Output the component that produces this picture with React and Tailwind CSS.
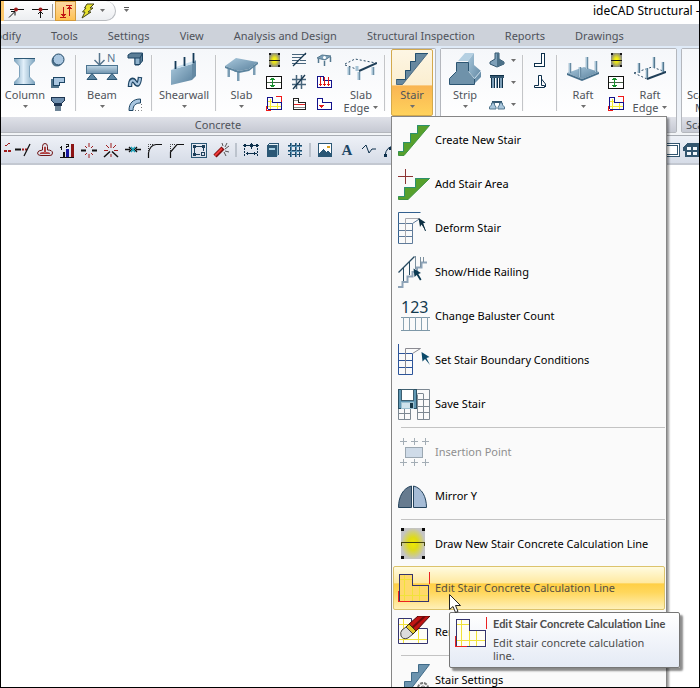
import React from 'react';

const NAVY = '#0c2f4b';

function Svg({ s = 16, children, crisp = true, className = '' }) {
  return (
    <svg
      width={s}
      height={s}
      viewBox={`0 0 ${s} ${s}`}
      fill="none"
      shapeRendering={crisp ? 'crispEdges' : 'auto'}
      className={`shrink-0 ${className}`}
      aria-hidden="true"
    >
      {children}
    </svg>
  );
}

function Gradients() {
  return (
    <svg width="0" height="0" className="absolute" aria-hidden="true">
      <defs>
        <linearGradient id="steelH">
          <stop offset="0" stopColor="#7fa6c0" />
          <stop offset="0.45" stopColor="#e2f0fa" />
          <stop offset="1" stopColor="#7fa6c0" />
        </linearGradient>
        <linearGradient id="steelV" x2="0" y2="1">
          <stop offset="0" stopColor="#c3d9e8" />
          <stop offset="1" stopColor="#6f93ad" />
        </linearGradient>
        <linearGradient id="steelD" x2="1" y2="1">
          <stop offset="0" stopColor="#a9c8dc" />
          <stop offset="1" stopColor="#5b829e" />
        </linearGradient>
        <radialGradient id="glow">
          <stop offset="0" stopColor="#f0ea00" />
          <stop offset="0.4" stopColor="#dfdb18" />
          <stop offset="1" stopColor="#c4c4c4" />
        </radialGradient>
        <radialGradient id="glowDark">
          <stop offset="0" stopColor="#ffff00" />
          <stop offset="0.4" stopColor="#e6e020" />
          <stop offset="1" stopColor="#8c8c80" />
        </radialGradient>
      </defs>
    </svg>
  );
}

/* ---------- large ribbon drawings ---------- */

const ColumnIcon = () => (
  <Svg s={32} crisp={false}>
    <path d="M5.500 5.500H25.500V8L20.500 13V24L25.500 29V31.500H5.500V29L10.500 24V13L5.500 8Z" fill="url(#steelH)" stroke="#7ea3bd" />
    <path d="M5 5.500H26M5 31.500H26" stroke="#2d5876" />
  </Svg>
);
const BeamIcon = () => (
  <Svg s={32} crisp={false}>
    <path d="M13.500 0V12M8.500 7L13.500 12L18.500 7" stroke="#55748c" strokeWidth="1.500" />
    <text x="21" y="9" fontSize="11" fontFamily="Noto Sans, sans-serif" fill="#55748c">N</text>
    <rect x="0.500" y="12.500" width="31" height="8" fill="url(#steelV)" stroke="#4c7490" />
    <path d="M6 20.500L11 26.500H1ZM26 20.500L31 26.500H21Z" fill="#5f88a4" stroke="#2a5472" />
  </Svg>
);
const ShearwallIcon = () => (
  <Svg s={32} crisp={false}>
    <path d="M3 17L24 11V27L3 32Z" fill="url(#steelD)" />
    <path d="M3 17L8 14L28 7L24 11Z" fill="#c8dfee" />
    <path d="M24 11L28 7V23L24 27Z" fill="#6489a3" />
    <path d="M7.500 8V16M16.500 4V13M25.500 0V10" stroke="#143a58" strokeWidth="1.800" />
  </Svg>
);
const SlabIcon = () => (
  <Svg s={34} crisp={false}>
    <path d="M2.500 15H5V24H2.500ZM12 18H14.500V28H12ZM28 12H30.500V22H28ZM9.500 16H11.500V19H9.500Z" fill="#7b9db4" />
    <path d="M0 13L11 5L33 9L24 16L14 18Z" fill="url(#steelD)" />
    <path d="M0 13L14 18L24 16L33 9V11L24 18L14 20L0 15Z" fill="#5c849e" />
  </Svg>
);
const SlabEdgeIcon = () => (
  <Svg s={32} crisp={false}>
    <path d="M0 11L10 6L31 10" stroke="#2a4c66" strokeDasharray="2 2" />
    <path d="M0 12L14 17" stroke="#2a4c66" strokeDasharray="2 2" />
    <path d="M4 14V22M14 19V27M28 14V22M12 13V18" stroke="#a5c2d4" strokeWidth="3" />
    <path d="M4.500 14V22M14.500 19V27M28.500 14V22" stroke="#6f90a6" />
    <path d="M14 18L32 10" stroke="#1f3f58" strokeWidth="2" />
  </Svg>
);
const STAIR = 'M31.500 0.500H19.500V8.500H14.500V17.500H9.500V26.500H0.500V31.500H6.500Z';
const StairIcon = () => (
  <Svg s={32} crisp={false}>
    <path d={STAIR} fill="#67889f" stroke="#4c6c84" />
    <path d="M32 0.500H19.500V8.500H14.500V17.500H9.500V26.500H0.500" stroke="#24506f" />
  </Svg>
);
const StripIcon = () => (
  <Svg s={32} crisp={false}>
    <path d="M9 8L16 0H25L19 8Z" fill="#b5d0e2" />
    <path d="M19 8L25 0V12L32 18V24L25 31L19 22Z" fill="url(#steelD)" />
    <path d="M7.500 9.500H19.500V18.500L25.500 25.500V31.500H0.500V25.500L7.500 18.500Z" fill="#6f92aa" stroke="#2c5572" />
    <path d="M19.500 18.500L25.500 25.500L32 18" stroke="#cfe2ee" />
  </Svg>
);
const RaftIcon = () => (
  <Svg s={32} crisp={false}>
    <path d="M0 20L17 14L32 19L15 26Z" fill="url(#steelD)" />
    <path d="M0 20L15 26L32 19V21L15 28L0 22Z" fill="#466f8b" />
    <path d="M3 10V20M13 14V24M20 4V16M29 8V19" stroke="#688ba3" strokeWidth="2.500" />
    <path d="M2.500 10V20M12.500 14V24M19.500 4V16M28.500 8V19" stroke="#a9c6d8" />
  </Svg>
);
const RaftEdgeIcon = () => (
  <Svg s={32} crisp={false}>
    <path d="M0 20L18 14L32 19M0 20L13 26" stroke="#2a4c66" strokeDasharray="2 2" />
    <path d="M13 26L32 19" stroke="#1f3f58" strokeWidth="2" />
    <path d="M5 10V20M13 15V25M20 4V15M29 9V19" stroke="#8fb0c4" strokeWidth="2.500" />
    <path d="M5.500 10V20M13.500 15V25M20.500 4V15M29.500 9V19" stroke="#55788f" />
  </Svg>
);

/* ---------- small ribbon drawings ---------- */

const CircleCol = () => (
  <Svg crisp={false}>
    <circle cx="7" cy="9" r="5.500" fill="#52748c" />
    <circle cx="8.500" cy="7.500" r="5.500" fill="#a9c6e0" stroke="#1d4564" />
  </Svg>
);
const PolyCol = () => (
  <Svg>
    <path d="M1 5H4V14H1ZM1 12H9V14H1Z" fill="#52748c" />
    <path d="M3.500 3.500H14.500V8.500H9.500V11.500H3.500Z" fill="#a9c6e0" stroke="#1d4564" />
  </Svg>
);
const CapCol = () => (
  <Svg>
    <path d="M1.500 1.500H14.500V4.500L11.500 7.500H4.500L1.500 4.500Z" fill="#6f8fae" stroke="#1d3450" />
    <path d="M4 8H12V10H4Z" fill="#1d3450" />
    <path d="M5 10H11V15H5Z" fill="#6c8396" />
  </Svg>
);
const BeamBox = () => (
  <Svg crisp={false}>
    <path d="M1 3L4 1H15.500V9L12 13H8V6H1Z" fill="#5a7d96" stroke="#1d4564" />
    <path d="M8 6H13V12.500H8Z" fill="#8fb2cc" stroke="#1d4564" />
    <path d="M13 6L15 2" stroke="#1d4564" />
  </Svg>
);
const BeamWave = () => (
  <Svg crisp={false}>
    <path d="M3 13C3 5 6 4 8 8S12 12 13 3" stroke="#1d4564" strokeWidth="4.500" />
    <path d="M3 12C3 6 6 5 8 8S12 12 13 4" stroke="#a9c6e0" strokeWidth="2.200" />
  </Svg>
);
const BeamArc = () => (
  <Svg crisp={false}>
    <path d="M2 14.500C2 7 6 3 13.500 3V7C9 7 6 9 6 14.500Z" fill="#a9c6e0" stroke="#1d4564" />
    <path d="M14.500 8V14.500H8" stroke="#777" strokeDasharray="1 2" />
  </Svg>
);
const Glow = () => (
  <Svg>
    <rect x="3" y="1" width="11" height="14" fill="url(#glowDark)" />
    <path d="M3 1H5V3H3ZM12 1H14V3H12ZM3 13H5V15H3ZM12 13H14V15H12ZM3 8H14V9H3Z" fill="#151515" />
  </Svg>
);
const SlabSpan = () => (
  <Svg>
    <rect x="0.500" y="2.500" width="15" height="12" fill="#fff" stroke="#111" />
    <path d="M1 8.500H15" stroke="#476047" />
    <path d="M6.500 4V13M4 5.500H9M5 4.500H8M4 11.500H9M5 12.500H8" stroke="#15902c" />
  </Svg>
);
const LShape = () => (
  <Svg>
    <path d="M1.500 2.500H6.500V6.500H15.500V13.500H1.500Z" fill="#fffef0" />
    <path d="M4.500 3V13M2 10.500H15M11.500 7V13M2 5.500H6" stroke="#f2ea30" />
    <path d="M1.500 13V1.500H6.500V6.500H15.500V13.500H1.500" stroke="#12128c" />
    <path d="M10 0.500H15.500V6M0.500 10V14.500H5" stroke="#f01818" />
  </Svg>
);
const Hatch = () => (
  <Svg crisp={false}>
    <path d="M1 2.500H15M1 5.500H11M1 8.500H8M9 8.500H15M1 11.500H15" stroke="#47657c" />
    <path d="M2 14L15 1" stroke="#16364e" strokeWidth="1.300" />
  </Svg>
);
const GridHatch = () => (
  <Svg crisp={false}>
    <path d="M1 5.500H15M1 10.500H15M5.500 1V15M10.500 1V15" stroke="#47657c" strokeWidth="1.500" />
    <path d="M2 15L14 1" stroke="#16364e" strokeWidth="1.300" />
  </Svg>
);
const StepLines = () => (
  <Svg>
    <path d="M2.500 2.500H7.500V6.500H14.500V13.500H2.500Z" fill="#fff" stroke="#222" />
    <path d="M3 4.500H7M3 11.500H14" stroke="#888" />
    <path d="M3 8.500H14" stroke="#e02020" />
  </Svg>
);
const MiniTable = () => (
  <Svg crisp={false}>
    <path d="M1 6L6 3L15 4L9 8Z" fill="#7da0b8" stroke="#55788f" />
    <circle cx="8.500" cy="5.500" r="1.500" fill="#fff" />
    <path d="M2.500 7V11M8.500 9V14M14.500 5V10" stroke="#55788f" strokeWidth="1.500" />
  </Svg>
);
const LoadIcon = () => (
  <Svg>
    <path d="M1.500 2.500H7.500V6.500H15.500V13.500H1.500Z" fill="#fff" stroke="#12128c" />
    <path d="M4.500 3V12M8.500 3V12M12.500 3V12M3 10.500H6M7 10.500H10M11 10.500H14" stroke="#e01818" />
  </Svg>
);
const SlabTri = () => (
  <Svg>
    <path d="M1.500 2.500H6.500V6.500H15.500V13.500H1.500Z" fill="#fff" stroke="#12128c" />
    <path d="M3 9H8L5.500 12Z" fill="#e01818" />
  </Svg>
);
const Footing = () => (
  <Svg crisp={false}>
    <path d="M6 1H10V7L15 10V12L8 15L1 12V10L6 7Z" fill="#7d9fb8" stroke="#33566f" />
    <path d="M8 1H10V7L15 10V12L8 15Z" fill="#4b7088" />
  </Svg>
);
const Piles = () => (
  <Svg>
    <path d="M1 1H15V4H1Z" fill="#33566f" />
    <path d="M3 4H5V14H3ZM7 4H9V14H7ZM11 4H13V14H11Z" fill="#7d9fb8" />
    <path d="M2.500 4V14M5.500 4V14M8.500 4V14M10.500 4V14M13.500 4V14M1 1.500H15" stroke="#0f3048" />
  </Svg>
);
const Combined = () => (
  <Svg crisp={false}>
    <path d="M3 5H13V7H3Z" fill="#33566f" />
    <path d="M2.500 7H5.500V9L7 11V13H0.500V11L2.500 9ZM10.500 7H13.500V9L15.500 11V13H9V11L10.500 9Z" fill="#a9c6dc" stroke="#55788f" />
  </Svg>
);
const WallFoot = () => (
  <Svg>
    <path d="M9.500 1.500H12.500V14.500H2.500V11.500H9.500Z" fill="#fff" stroke={NAVY} />
  </Svg>
);
const WallFoot2 = () => (
  <Svg crisp={false}>
    <path d="M6.500 1.500H9.500V11.500H12.500V13.500H2.500V11.500H6.500ZM9.500 5L13.500 10V13" fill="#fff" stroke={NAVY} />
  </Svg>
);

/* ---------- menu drawings ---------- */

const pointer = 'M0 0L7.500 4.500L4.800 5.500L8 11L6.500 12L3.200 6.500L1 8.500Z';

const GreenStair = () => (
  <Svg s={32} crisp={false}>
    <path d="M31.500 1.500H19.500V9.500H12.500V18.500H5.500V27.500H0.500V31.500H6Z" fill="#57a02c" stroke="#3f9440" />
    <path d="M31.500 1.500H19.500V9.500H12.500V18.500H5.500V27.500H0.500" stroke="#2c8f6c" />
  </Svg>
);
const AddArea = () => (
  <Svg s={32} crisp={false}>
    <path d="M31.500 10.500H17.500V19.500H6.500V28.500H0.500V31.500H10Z" fill="#57a02c" stroke="#3f9440" />
    <path d="M31.500 10.500H17.500V19.500H6.500V28.500H0.500" stroke="#2c8f6c" />
    <path d="M7.500 1V16M0 8.500H15" stroke="#8d3434" />
  </Svg>
);
const Deform = () => (
  <Svg s={32} crisp={false}>
    <path d="M0.500 31.500V0.500H22.500" stroke="#33608f" />
    <path d="M0.500 11.500H14.500L22 6.500M0.500 18.500H14M0.500 24.500H14M0.500 31.500H14.500V11.500" stroke="#5f7b9a" />
    <path d="M7.500 31V6.500H22" stroke="#a9a9ae" />
    <path d="M0 0L7 4.500L4.500 5.500L7 12.500L3 6.500L1.500 9Z" fill="#0c2f42" transform="translate(20.500 6)" />
    <path d="M24 10L27.500 19" stroke="#0c2f42" />
  </Svg>
);
const Railing = () => (
  <Svg s={32} crisp={false}>
    <path d="M0 31H4.500V26H9.500V20.500H14.500V16H19V11.500H23.500V6.500H29" stroke="#8ea3b7" strokeWidth="2" />
    <path d="M0.500 16.500L16.500 0.500" stroke="#274a60" strokeWidth="1.300" />
    <path d="M5.500 12V25M11.500 6V19" stroke="#274a60" />
    <path d="M17.500 0V13M22.500 1V11M25.500 1V6" stroke="#7b8f9e" />
    <path d={pointer} fill="#0c3a52" transform="translate(15.500 12.500)" />
  </Svg>
);
const Baluster = () => (
  <Svg s={32} crisp={false}>
    <text x="3" y="13" fontSize="16" fontFamily="Noto Sans, sans-serif" fill="#143a4e">123</text>
    <path d="M3 17.500H32M3 30.500H32" stroke="#7e98a8" />
    <path d="M5.500 17V30M11.500 17V30M17.500 17V30M23.500 17V30M29.500 17V30" stroke="#8ba3b2" />
  </Svg>
);
const Boundary = () => (
  <Svg s={32} crisp={false}>
    <path d="M0.500 0V30.500H14.500V9.500H0.500M0.500 16.500H14M0.500 23.500H14" stroke="#2c549a" />
    <path d="M7.500 30V4.500H22.500L14.500 9.500" stroke="#8a8a92" />
    <path d="M0 0L8 5L5 6L8.500 13L3.500 7L1 9.500Z" fill="#0c4a6a" transform="translate(23.500 8)" />
  </Svg>
);
const SaveStair = () => (
  <Svg s={32} crisp={false}>
    <path d="M19 1.500H31.500V31.500H19.500V6.500M25.500 6V31M19.500 5.500H25.500M19 11.500H31M19 18.500H31M19 24.500H31M0.500 20V31.500H12.500V21M6.500 21V31M0.500 25.500H12" stroke="#7d8892" />
    <rect x="0.500" y="1.500" width="18" height="19" fill="#5f97b3" stroke="#2a5064" />
    <rect x="3.500" y="1.500" width="12" height="11" fill="#fff" stroke="#3f5f70" />
    <rect x="3.500" y="14.500" width="12" height="6" fill="#cfe3ec" stroke="#9cc0d0" />
    <rect x="12" y="15" width="3" height="5" fill="#173848" />
  </Svg>
);
const Insertion = () => (
  <Svg s={32}>
    <path d="M2 5.500H9M5.500 2V9M13 5.500H20M16.500 2V9M24 5.500H31M27.500 2V9M2 26.500H9M5.500 23V30M13 26.500H20M16.500 23V30M24 26.500H31M27.500 23V30" stroke="#a3adb5" />
    <rect x="7.500" y="11.500" width="17" height="10" fill="#cfdbe8" stroke="#9ba7b1" />
  </Svg>
);
const Mirror = () => (
  <Svg s={32} crisp={false}>
    <path d="M13.500 6C5 8 0.500 17 0.500 27.500H13.500Z" fill="#677b8f" stroke="#24435c" />
    <path d="M15.500 6C24 8 28.500 17 28.500 27.500H15.500Z" fill="#a6bcd6" stroke="#24435c" />
  </Svg>
);
const DrawLine = () => (
  <Svg s={32}>
    <rect x="3" y="0" width="24" height="31" fill="url(#glow)" />
    <path d="M3 0H6V3H3ZM24 0H27V3H24ZM3 28H6V31H3ZM24 28H27V31H24Z" fill="#0a0a0a" />
    <path d="M3.500 18V14.500H26.500V18" stroke="#43430f" />
  </Svg>
);
const EditLine = ({ fill = '#fffef6' }) => (
  <Svg s={32}>
    <path d="M1.500 2.500H14.500V13.500H31.500V29.500H1.500Z" fill={fill} />
    <path d="M6.500 3V29M2 7.500H14M2 23.500H31M21.500 14V29M14.500 14V29" stroke="#f1e23a" />
    <path d="M1.500 2.500H14.500V13.500H30.500V29.500H1.500Z" stroke="#34346e" />
    <path d="M31.500 0V12M0.500 19V29.500H12" stroke="#ea2222" />
  </Svg>
);
const RemoveLine = () => (
  <Svg s={32} crisp={false}>
    <path d="M0.500 2.500H13.500V12.500H29.500V27.500H0.500Z" fill="#fffef6" stroke="#34346e" />
    <path d="M5.500 3V27M1 8.500H13M1 23.500H29M20.500 13V27" stroke="#f1e23a" />
    <path d="M20 0H32L18 15L11 8Z" fill="#c01414" stroke="#4d0808" />
    <path d="M27 0L14 12" stroke="#6b0c0c" strokeWidth="2" />
    <path d="M11 8L18 15L15 18L8 11Z" fill="#e2c72a" stroke="#3a3208" />
    <path d="M8 11L15 18L10 22Q5 24 3 20Q2 16 4 14Z" fill="#dcdcdc" stroke="#444" />
  </Svg>
);
const StairSettings = () => (
  <Svg s={32} crisp={false}>
    <path d="M31.500 0.500H20.500V8.500H13.500V17.500H6.500V26.500H0.500V31.500H8Z" fill="#6b93ae" stroke="#406b88" />
    <circle cx="25" cy="24" r="5" fill="#f4f4f4" stroke="#777" strokeWidth="2" strokeDasharray="3 1" />
    <circle cx="25" cy="24" r="2" fill="#fafafa" stroke="#777" />
  </Svg>
);

/* ---------- toolbar drawings ---------- */

const T = {
  cut: () => (
    <Svg>
      <path d="M8 8.500H15" stroke="#a01c1c" strokeWidth="2" strokeDasharray="3 1" />
      <path d="M9 4L14 1" stroke="#a01c1c" />
    </Svg>
  ),
  trim: () => (
    <Svg crisp={false}>
      <path d="M0 7.500H6" stroke="#111" strokeWidth="2" />
      <path d="M7 7.500H12" stroke="#a01c1c" strokeWidth="2" strokeDasharray="2 1" />
      <path d="M9 14L15 2" stroke="#111" strokeWidth="1.300" />
    </Svg>
  ),
  offset: () => (
    <Svg crisp={false}>
      <path d="M5.500 8V4.500A2.500 3 0 0 1 10.500 4.500V8Q15.500 8 15.500 11T12 13.500H4Q0.500 13.500 0.500 11T5.500 8Z" stroke="#701414" />
      <path d="M3 11.500H13Q13 10.500 8.500 10.500V5H7.500V10.500Q3 10.500 3 11.500Z" stroke="#b04040" />
    </Svg>
  ),
  order: () => (
    <Svg>
      <path d="M4 10H6V15H4Z" fill="#111" />
      <path d="M7 7H10V15H7Z" fill="#1616a0" />
      <path d="M12 2H15V15H12Z" fill="#8c1414" />
      <path d="M2.500 4V8M1 5.500H2M1 15.500H15M7 2.500H9V4.500H7V6" stroke="#111" />
    </Svg>
  ),
  extendH: () => (
    <Svg crisp={false}>
      <path d="M0 8.500H5M11 8.500H16" stroke="#111" strokeWidth="2" />
      <path d="M8 1V5M8 12V16M4 4L6 6M12 4L10 6M4 13L6 11M12 13L10 11" stroke="#a01c1c" />
    </Svg>
  ),
  extendX: () => (
    <Svg crisp={false}>
      <path d="M1 15L7 9.500M15 15L9 9.500" stroke="#111" strokeWidth="1.500" />
      <path d="M8 1V6M8 12V15M3 3L6 6M13 3L10 6M1 8.500H5M11 8.500H15" stroke="#a01c1c" />
    </Svg>
  ),
  join: () => (
    <Svg crisp={false}>
      <path d="M0 7.500H5M11 7.500H16M4 5L6.500 7.500L4 10M12 5L9.500 7.500L12 10" stroke="#111" strokeWidth="1.300" />
      <path d="M6 5L10 10M10 5L6 10" stroke="#18a0b8" strokeWidth="1.500" />
    </Svg>
  ),
  fillet: () => (
    <Svg crisp={false}>
      <path d="M1.500 16V11Q3 3 9 2.500H15" stroke="#111" strokeWidth="1.200" />
      <path d="M1.500 9V2.500H7" stroke="#333" strokeDasharray="1 1" />
    </Svg>
  ),
  chamfer: () => (
    <Svg crisp={false}>
      <path d="M1.500 16V10L8 2.500H15" stroke="#111" strokeWidth="1.200" />
      <path d="M1.500 9V2.500H7" stroke="#333" strokeDasharray="1 1" />
    </Svg>
  ),
  frame: () => (
    <Svg>
      <rect x="0.500" y="1.500" width="15" height="14" stroke="#2b5775" />
      <path d="M3.500 11V4.500H12.500V9M5 12.500H9" stroke="#1d3f5a" />
      <path d="M2 3H5V6H2ZM11 3H14V6H11ZM2 11H5V14H2Z" fill="#1d3f5a" />
      <rect x="10.500" y="10.500" width="3" height="3" stroke="#1d3f5a" />
    </Svg>
  ),
  wand: () => (
    <Svg crisp={false}>
      <path d="M2 14L10 6" stroke="#7c0c0c" strokeWidth="4.500" />
      <path d="M2 13.500L9 6.500" stroke="#f03a3a" strokeWidth="2" />
      <path d="M10 4L9 1M12 5L14 1M12 7L16 4M12 9L16 10M11 10L13 14" stroke="#555" />
    </Svg>
  ),
  dims: () => (
    <Svg>
      <path d="M0 3.500H16M3 11.500H14" stroke={NAVY} />
      <path d="M1.500 6V15M14.500 6V15M8.500 5V8" stroke={NAVY} strokeDasharray="2 1" />
      <path d="M1 2H3V5H1ZM8 1H9V6H8ZM7 2H10V5H7ZM13 2H15V5H13ZM4 10H5V13H4ZM11 10H12V13H11Z" fill={NAVY} />
    </Svg>
  ),
  book: () => (
    <Svg>
      <path d="M2 4L4 1H14V12L12 15H2Z" fill="#2b5775" />
      <path d="M4 2H13V3H4Z" fill="#e8f2f8" />
      <path d="M4 6H10V8H4Z" fill="#a9d0e4" />
      <path d="M12.500 3V14" stroke="#8db4c8" />
    </Svg>
  ),
  grid: () => (
    <Svg>
      <path d="M1 3.500H15M1 8.500H15M1 12.500H15M3.500 1V15M8.500 1V15M12.500 1V15" stroke="#1f4a68" />
      <path d="M1 4.500H15M1 9.500H15M4.500 1V15M9.500 1V15" stroke="#5d93b4" />
    </Svg>
  ),
  image: () => (
    <Svg>
      <rect x="1.500" y="1.500" width="13" height="13" fill="#fff" stroke="#2b5775" />
      <path d="M2 11L6 7L9 10L11 9L14 12V14H2Z" fill="#2b5775" />
      <path d="M10 4H13V6H10Z" fill="#d8a020" />
    </Svg>
  ),
  wave: () => (
    <Svg crisp={false}>
      <path d="M1 7L5 3L8 11L11 7H15" stroke={NAVY} />
    </Svg>
  ),
  arc: () => (
    <Svg crisp={false}>
      <path d="M2 14Q3 4 12 4" stroke={NAVY} />
      <path d="M1 12H4V15H1ZM6 5H9V8H6Z" fill={NAVY} />
    </Svg>
  ),
  page: () => (
    <Svg>
      <rect x="0.500" y="1.500" width="15" height="13" fill="#fff" stroke="#33566f" />
      <rect x="2.500" y="3.500" width="11" height="9" stroke="#33566f" />
    </Svg>
  ),
  house: () => (
    <Svg>
      <path d="M0 5L4 1H16V15H2V9H0Z" fill="#33566f" />
      <path d="M4 5H8V8H4ZM10 5H14V8H10ZM4 10H8V13H4ZM10 10H14V13H10Z" fill="#f2f7fb" />
    </Svg>
  ),
};

/* ---------- building blocks ---------- */

const Caret = ({ className = '' }) => (
  <svg width="5" height="3" viewBox="0 0 5 3" className={`shrink-0 ${className}`} aria-hidden="true">
    <path d="M0 0H5L2.500 3Z" fill="#6e6e6e" />
  </svg>
);

function BigButton({ icon, label, sub, width, className = '' }) {
  return (
    <button className={`flex shrink-0 flex-col items-center ${width} ${className || 'pt-1'}`}>
      <span className="flex h-8 justify-center">{icon}</span>
      <span className="mt-[3px] block whitespace-nowrap leading-[13px]">{label}</span>
      {sub ? (
        <span className="flex items-center gap-1 leading-[13px]">
          {sub}
          <Caret />
        </span>
      ) : (
        <Caret className="mt-1" />
      )}
    </button>
  );
}

function SmallColumn({ items, width = 'w-4' }) {
  return (
    <div className={`flex shrink-0 flex-col items-center ${width}`}>
      {items.map(([name, Icon]) => (
        <button key={name} aria-label={name} className="flex h-[22px] items-center">
          <Icon />
        </button>
      ))}
    </div>
  );
}

const Sep = () => <div className="mt-1.5 h-[56px] w-0.5 shrink-0 border-r border-[#fafafa] bg-[#c3c5c8]" />;

function Group({ title, className = '', bodyClass = '', children }) {
  return (
    <section className={`flex shrink-0 flex-col self-start border border-[#b4b7bd] ${className}`}>
      <div className={`flex h-[68px] items-start bg-linear-to-b from-[#f5f7fa] to-white ${bodyClass}`}>{children}</div>
      <div className="h-[15px] whitespace-nowrap bg-linear-to-b from-[#dfe1e8] to-[#c6c9d3] text-center leading-[15px]">{title}</div>
    </section>
  );
}

const ToolSep = () => (
  <div className="flex w-2 shrink-0 justify-center">
    <div className="h-3.5 w-0.5 bg-[#bcc3cd]" />
  </div>
);

function Tool({ name, icon, width = 'w-[22px]', align = 'justify-center' }) {
  const Icon = T[icon];
  return (
    <button aria-label={name} className={`flex h-5 shrink-0 items-center overflow-hidden ${width} ${align}`}>
      <Icon />
    </button>
  );
}

function MenuItem({ icon, label, state = 'normal', children }) {
  const look =
    state === 'active'
      ? 'border-[#dcc36c] bg-[linear-gradient(to_bottom,#fffbe0_0%,#ffe9a0_38%,#ffcf45_40%,#ffd75c_60%,#fff0b8_100%)] text-[#565040]'
      : state === 'disabled'
        ? 'border-transparent text-[#8f8f8f]'
        : 'border-transparent text-black';
  return (
    <li className="relative">
      <button
        role="menuitem"
        disabled={state === 'disabled'}
        className={`flex h-11 w-full items-center gap-[5px] rounded-xs border pl-1 text-left whitespace-nowrap ${look}`}
      >
        {icon}
        <span>{label}</span>
      </button>
      {children}
    </li>
  );
}

const MenuRule = () => (
  <li role="separator" className="ml-2 h-1 pt-px">
    <div className="h-px bg-[#c3c3c3]" />
  </li>
);

function Tooltip() {
  return (
    <div
      role="tooltip"
      className="absolute top-[46px] left-14 z-20 flex w-[231px] gap-1.5 rounded-xs border border-[#767676] bg-linear-to-b from-white to-[#e4eaf5] px-[5px] py-1 text-[#4c4c4c] shadow-[3px_3px_2px_rgba(0,0,0,0.45)]"
    >
      <EditLine />
      <div className="h-[46px]">
        <p className="whitespace-nowrap font-['Lato','Noto_Sans',sans-serif] font-bold leading-[13px]">
          Edit Stair Concrete Calculation Line
        </p>
        <p className="mt-1.5 w-[170px] leading-[13px]">Edit stair concrete calculation line.</p>
      </div>
    </div>
  );
}

function StairMenu() {
  return (
    <ul
      role="menu"
      className="absolute top-full left-0 z-10 w-[276px] border border-[#868686] bg-[#fafafa] p-px shadow-[2px_2px_2px_rgba(0,0,0,0.4)]"
    >
      <MenuItem icon={<GreenStair />} label="Create New Stair" />
      <MenuItem icon={<AddArea />} label="Add Stair Area" />
      <MenuItem icon={<Deform />} label="Deform Stair" />
      <MenuItem icon={<Railing />} label="Show/Hide Railing" />
      <MenuItem icon={<Baluster />} label="Change Baluster Count" />
      <MenuItem icon={<Boundary />} label="Set Stair Boundary Conditions" />
      <MenuItem icon={<SaveStair />} label="Save Stair" />
      <MenuRule />
      <MenuItem icon={<Insertion />} label="Insertion Point" state="disabled" />
      <MenuItem icon={<Mirror />} label="Mirror Y" />
      <MenuRule />
      <MenuItem icon={<DrawLine />} label="Draw New Stair Concrete Calculation Line" />
      <MenuItem icon={<EditLine fill="#ffd96a" />} label="Edit Stair Concrete Calculation Line" state="active">
        <Tooltip />
        <svg width="13" height="20" viewBox="0 0 13 20" className="absolute top-7 left-14 z-30" aria-hidden="true">
          <path d="M0.500 0.500V15.500L4 12.500L6.500 18.500L9 17.500L6.500 11.500H11.500Z" fill="#fff" stroke="#222" />
        </svg>
      </MenuItem>
      <MenuItem icon={<RemoveLine />} label="Remove" />
      <MenuRule />
      <MenuItem icon={<StairSettings />} label="Stair Settings" />
    </ul>
  );
}

function TitleBar() {
  return (
    <header className="flex h-[23px] shrink-0 items-start bg-white">
      <div className="flex h-5 w-[115px] shrink-0 items-center rounded-r-full border-r border-b border-[#b9bcc0] bg-linear-to-b from-white to-[#eceef1]">
        <div className="h-5 w-[3px] bg-[#fcc86c]" />
        <button aria-label="Node snap" className="flex w-6 justify-center">
          <Svg crisp={false}>
            <path d="M1 14.500L6.500 9M3 8.500H7V12.500M2 6.500H16" stroke="#111" />
            <circle cx="8" cy="6.500" r="2" fill="#a01c1c" />
          </Svg>
        </button>
        <button aria-label="Line snap" className="flex w-6 justify-center">
          <Svg crisp={false}>
            <path d="M0 6.500H16M8.500 7V15M6 11L8.500 8.500L11 11" stroke="#111" />
            <circle cx="8.500" cy="6.500" r="2" fill="#a01c1c" />
          </Svg>
        </button>
        <div className="mr-0.5 h-3.5 w-px bg-[#9a9a9a]" />
        <button aria-label="Perpendicular" className="flex h-5 w-[21px] shrink-0 items-center justify-center border border-[#d29a3c] bg-linear-to-b from-[#fcd9a0] to-[#ffc251]">
          <Svg>
            <path d="M2 14.500H8M5.500 4V14M3 11.500H8M4 12.500H7M8 2.500H14M11.500 3V13M9 5.500H14M10 4.500H13" stroke="#c01414" />
          </Svg>
        </button>
        <button aria-label="Run" className="flex w-6 justify-center">
          <Svg crisp={false}>
            <path d="M7 1H14L10 5H13L8 9H11L2 15L5 9H2.500L6 5H4.500Z" fill="#e8e22c" stroke="#444418" />
          </Svg>
        </button>
      </div>
      <Caret className="mt-2 -ml-4" />
      <div className="mt-1.5 ml-[19px] flex flex-col items-center gap-px">
        <div className="h-px w-[5px] bg-[#555]" />
        <Caret />
      </div>
      <h1 className="ml-auto w-[106px] shrink-0 overflow-hidden whitespace-nowrap text-[12px] leading-5 text-black">
        ideCAD Structural - Sample
      </h1>
    </header>
  );
}

const TABS = ['Tools', 'Settings', 'View', 'Analysis and Design', 'Structural Inspection', 'Reports', 'Drawings'];

export default function App() {
  return (
    <div className="flex h-screen flex-col overflow-hidden border border-black bg-white font-['Noto_Sans','Open_Sans',sans-serif] text-[11px] text-[#4f535a]">
      <Gradients />
      <TitleBar />

      <nav className="flex h-[22px] shrink-0 items-center gap-[30px] overflow-hidden bg-[#cdd2da] pt-0.5 whitespace-nowrap">
        <a href="#modify" className="flex w-5 shrink-0 justify-end overflow-hidden">Modify</a>
        {TABS.map((t) => (
          <a key={t} href={`#${t}`}>{t}</a>
        ))}
      </nav>

      <div className="relative z-10 flex h-[89px] shrink-0 gap-1 bg-linear-to-b from-[#dfeaf7] to-[#f2f4f7] pt-0.5">
        <Group title="Concrete" className="rounded-r-xs border-l-0" bodyClass="pr-0.5">
          <BigButton icon={<ColumnIcon />} label="Column" width="w-12" />
          <SmallColumn width="w-[18px]" items={[['Circular column', CircleCol], ['Polygon column', PolyCol], ['Column cap', CapCol]]} />
          <div className="w-2 shrink-0" />
          <Sep />
          <BigButton icon={<BeamIcon />} label="Beam" width="w-[50px]" />
          <SmallColumn items={[['Bracket', BeamBox], ['Curved beam', BeamWave], ['Arc beam', BeamArc]]} />
          <div className="w-2 shrink-0" />
          <Sep />
          <BigButton icon={<ShearwallIcon />} label="Shearwall" width="w-[62px]" />
          <Sep />
          <BigButton icon={<SlabIcon />} label="Slab" width="w-[49px]" />
          <div className="flex shrink-0 gap-[9px]">
            <SmallColumn items={[['Slab line', Glow], ['Slab span', SlabSpan], ['Slab outline', LShape]]} />
            <SmallColumn items={[['Hatch', Hatch], ['Grid hatch', GridHatch], ['Step lines', StepLines]]} />
            <SmallColumn items={[['Slab opening', MiniTable], ['Slab load', LoadIcon], ['Slab level', SlabTri]]} />
          </div>
          <BigButton icon={<SlabEdgeIcon />} label="Slab" sub="Edge" width="w-[46px]" className="ml-1.5 pt-1" />
          <Sep />
          <div className="relative ml-[5px]">
            <BigButton
              icon={<StairIcon />}
              label="Stair"
              width="w-[42px]"
              className="h-[67px] rounded-xs border border-[#d3a94c] bg-[linear-gradient(to_bottom,#fdf6e4_0%,#fbeed0_54%,#f9b552_55%,#ffd25c_100%)] pt-[3px]"
            />
            <StairMenu />
          </div>
        </Group>

        <Group title="" className="rounded-xs">
          <BigButton icon={<StripIcon />} label="Strip" width="w-12" />
          <SmallColumn items={[['Footing', Footing], ['Piles', Piles], ['Combined footing', Combined]]} />
          <div className="flex w-[17px] shrink-0 flex-col items-center">
            {['Footing', 'Piles', 'Combined footing'].map((n) => (
              <button key={n} aria-label={`${n} options`} className="flex h-[22px] items-center">
                <Caret />
              </button>
            ))}
          </div>
          <Sep />
          <SmallColumn width="w-8" items={[['Wall footing', WallFoot], ['Tapered footing', WallFoot2]]} />
          <Sep />
          <BigButton icon={<RaftIcon />} label="Raft" width="w-[50px]" />
          <SmallColumn items={[['Raft line', Glow], ['Raft span', SlabSpan], ['Raft outline', LShape]]} />
          <BigButton icon={<RaftEdgeIcon />} label="Raft" sub="Edge" width="w-[52px]" />
        </Group>

        <Group title={<span className="block pl-1 text-left">Scale</span>} className="w-20 rounded-xs">
          <button className="flex w-full flex-col pt-[39px] pl-[5px] text-left">
            <span className="leading-[13px]">Scale</span>
            <span className="pl-2 leading-[13px]">Model</span>
          </button>
        </Group>
      </div>

      <div className="flex h-[30px] shrink-0 items-center border-t border-b-2 border-t-[#a9adb4] border-b-[#c3c8d1] bg-linear-to-b from-[#eef1f7] to-[#d6dce7]">
        <Tool name="Cut" icon="cut" width="w-[11px]" align="justify-end" />
        <Tool name="Trim" icon="trim" />
        <Tool name="Offset" icon="offset" />
        <Tool name="Order" icon="order" />
        <Tool name="Extend" icon="extendH" />
        <Tool name="Intersect" icon="extendX" />
        <Tool name="Join" icon="join" />
        <Tool name="Fillet" icon="fillet" />
        <Tool name="Chamfer" icon="chamfer" />
        <Tool name="Frame" icon="frame" />
        <Tool name="Wand" icon="wand" />
        <ToolSep />
        <Tool name="Dimensions" icon="dims" />
        <Tool name="Library" icon="book" />
        <Tool name="Grid" icon="grid" />
        <ToolSep />
        <Tool name="Image" icon="image" />
        <button className="w-[22px] shrink-0 text-center font-['Liberation_Serif',serif] text-[15px] leading-5 font-bold text-[#1d4564]">A</button>
        <Tool name="Polyline" icon="wave" />
        <Tool name="Arc" icon="arc" />
        <div className="grow" />
        <Tool name="Page" icon="page" />
        <Tool name="Views" icon="house" width="w-4" align="justify-start" />
      </div>

      <main className="grow bg-white" />
    </div>
  );
}
